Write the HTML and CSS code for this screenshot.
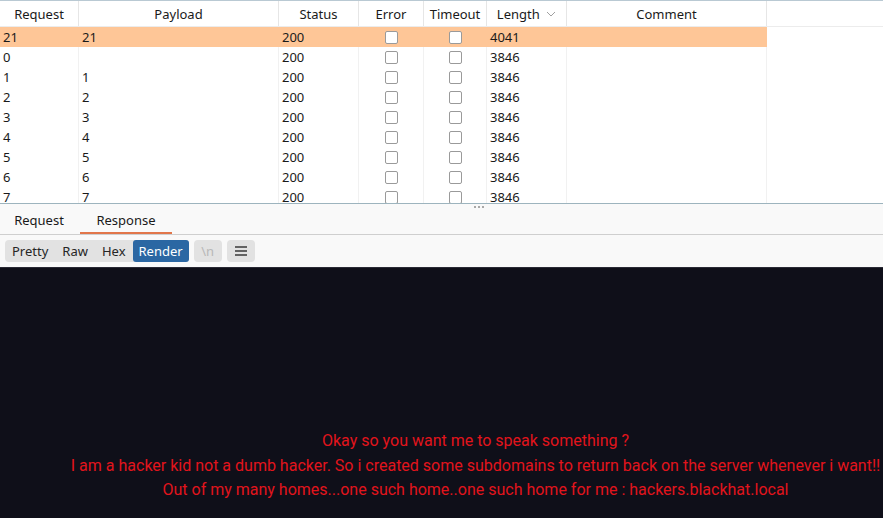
FILE: index.html
```html
<!DOCTYPE html>
<html>
<head>
<meta charset="utf-8">
<link rel="stylesheet" href="styles.css">
</head>
<body>
<div class="table-wrap">
  <div class="row head">
    <div class="c">Request</div>
    <div class="c">Payload</div>
    <div class="c">Status</div>
    <div class="c">Error</div>
    <div class="c">Timeout</div>
    <div class="c sort">Length <svg width="10" height="6" viewBox="0 0 10 6"><path d="M1 1 L5 5 L9 1" fill="none" stroke="#a0a0a0" stroke-width="1"/></svg></div>
    <div class="c">Comment</div>
    <div class="c last"></div>
  </div>
  <div class="row sel"><div class="c">21</div><div class="c">21</div><div class="c">200</div><div class="c cb"><span class="box"></span></div><div class="c cb"><span class="box"></span></div><div class="c">4041</div><div class="c"></div><div class="c rest"></div></div>
  <div class="row"><div class="c">0</div><div class="c"></div><div class="c">200</div><div class="c cb"><span class="box"></span></div><div class="c cb"><span class="box"></span></div><div class="c">3846</div><div class="c"></div></div>
  <div class="row"><div class="c">1</div><div class="c">1</div><div class="c">200</div><div class="c cb"><span class="box"></span></div><div class="c cb"><span class="box"></span></div><div class="c">3846</div><div class="c"></div></div>
  <div class="row"><div class="c">2</div><div class="c">2</div><div class="c">200</div><div class="c cb"><span class="box"></span></div><div class="c cb"><span class="box"></span></div><div class="c">3846</div><div class="c"></div></div>
  <div class="row"><div class="c">3</div><div class="c">3</div><div class="c">200</div><div class="c cb"><span class="box"></span></div><div class="c cb"><span class="box"></span></div><div class="c">3846</div><div class="c"></div></div>
  <div class="row"><div class="c">4</div><div class="c">4</div><div class="c">200</div><div class="c cb"><span class="box"></span></div><div class="c cb"><span class="box"></span></div><div class="c">3846</div><div class="c"></div></div>
  <div class="row"><div class="c">5</div><div class="c">5</div><div class="c">200</div><div class="c cb"><span class="box"></span></div><div class="c cb"><span class="box"></span></div><div class="c">3846</div><div class="c"></div></div>
  <div class="row"><div class="c">6</div><div class="c">6</div><div class="c">200</div><div class="c cb"><span class="box"></span></div><div class="c cb"><span class="box"></span></div><div class="c">3846</div><div class="c"></div></div>
  <div class="row"><div class="c">7</div><div class="c">7</div><div class="c">200</div><div class="c cb"><span class="box"></span></div><div class="c cb"><span class="box"></span></div><div class="c">3846</div><div class="c"></div></div>
</div>
<div class="lower">
  <span class="grip"><i></i><i></i><i></i></span>
  <div class="tabs">
    <div class="tab">Request</div>
    <div class="tab active">Response</div>
  </div>
  <div class="toolbar">
    <div class="seg">
      <span class="btn">Pretty</span>
      <span class="btn">Raw</span>
      <span class="btn">Hex</span>
      <span class="btn on">Render</span>
    </div>
    <span class="tool dis">\n</span>
    <span class="tool"><svg width="14" height="12" viewBox="0 0 14 12"><path d="M1 2 H13 M1 6 H13 M1 10 H13" stroke="#3a3a3a" stroke-width="1.6"/></svg></span>
  </div>
</div>
<div class="render">
  <p>Okay so you want me to speak something ?</p>
  <p>I am a hacker kid not a dumb hacker. So i created some subdomains to return back on the server whenever i want!!</p>
  <p>Out of my many homes...one such home..one such home for me : hackers.blackhat.local</p>
</div>
</body>
</html>
```

FILE: styles.css
```css
* { box-sizing: border-box; }
html, body { margin: 0; padding: 0; }
body {
  width: 883px;
  height: 518px;
  overflow: hidden;
  font-family: "Segoe UI", "Noto Sans", "Open Sans", sans-serif;
  font-size: 13px;
  color: #1a1a1a;
  background: #ffffff;
  display: flex;
  flex-direction: column;
}
.table-wrap {
  height: 204px;
  overflow: hidden;
  border-top: 1px solid #b9c9d3;
  border-bottom: 1px solid #9db4be;
  background: #fff;
  flex: none;
}
.row {
  display: grid;
  grid-template-columns: 79px 200px 80px 65px 63px 80px 200px 1fr;
  height: 20px;
  align-items: stretch;
}
.row .c {
  padding-left: 3px;
  line-height: 21px;
  white-space: nowrap;
  border-right: 1px solid #f1f1f1;
  overflow: hidden;
}
.row.head {
  height: 26px;
  border-bottom: 1px solid #ececec;
}
.row.head .c {
  text-align: center;
  line-height: 26px;
  padding-left: 0;
  border-right: 1px solid #e6e6e6;
}
.row.head .c.last { border-right: none; }
.sort svg { margin-left: 3px; vertical-align: 2px; }
.row.sel { background: #fec697; }
.row.sel .c { border-right-color: #fec697; }
.row.sel .c.rest { background: #ffffff; border-right: none; }
.c.cb {
  display: flex;
  align-items: center;
  justify-content: center;
  padding-left: 0;
}
.box {
  width: 13px;
  height: 13px;
  border: 1px solid #9a9a9a;
  border-radius: 2px;
  background: #fff;
  display: block;
}
.lower {
  background: #f9f9f9;
  flex: none;
  position: relative;
}
.grip {
  position: absolute;
  left: 474px;
  top: 2px;
  display: flex;
  gap: 2px;
}
.grip i {
  width: 2px;
  height: 2px;
  background: #a8a8a8;
  display: block;
}
.tabs {
  display: flex;
  height: 31px;
  border-bottom: 1px solid #cfcfcf;
}
.tab {
  width: 78px;
  text-align: center;
  line-height: 33px;
}
.tab.active {
  width: 92px;
  margin-left: 2px;
  border-bottom: 2px solid #e2764a;
}
.toolbar {
  height: 32px;
  display: flex;
  align-items: center;
  padding-left: 5px;
  gap: 5px;
}
.seg {
  display: flex;
  background: #e2e2e2;
  border-radius: 4px;
  height: 22px;
  align-items: stretch;
}
.btn {
  padding: 0 7px;
  line-height: 22px;
  color: #262626;
  font-size: 13px;
}
.btn.on {
  padding: 0 6px;
  background: #2b67a3;
  color: #fff;
  border-radius: 3px;
}
.tool {
  width: 28px;
  height: 22px;
  background: #e2e2e2;
  border-radius: 4px;
  display: flex;
  align-items: center;
  justify-content: center;
  font-size: 13px;
}
.tool.dis { color: #b8b8b8; }
.render {
  flex: 1;
  background: #0f0f19;
  border-top: 1px solid #2a2a35;
  padding: 161px 0 0 68px;
  font-family: Roboto, "Liberation Sans", sans-serif;
  font-size: 16px;
  color: #e2141c;
  text-align: center;
}
.render p {
  margin: 0;
  line-height: 24.5px;
  white-space: nowrap;
}
```
